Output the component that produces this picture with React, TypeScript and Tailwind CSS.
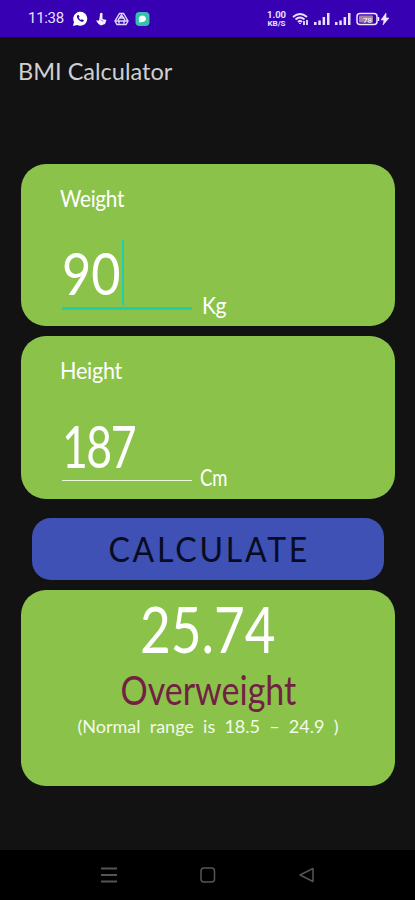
import React from "react";

function StatusBar() {
  return (
    <header className="flex h-[37px] shrink-0 items-center bg-[#3700b3] pl-[28px] pr-[25px] text-[#e9e0ff]">
      <span className="w-[44px] whitespace-nowrap font-['Roboto',sans-serif] text-[15px] leading-[19px] tracking-[-0.3px]">11:38</span>
      <svg className="mr-[7px]" width="16" height="16" viewBox="0 0 16 16">
        <path d="M1 15l1-4A7 7 0 1 1 5 14Z" fill="#fff" />
        <path d="M5 4.500c-.8 3 3 6.500 6 6.300l1-1.600-2-1-1 .8c-1-.4-1.800-1.200-2.200-2.200l.7-1-1-2Z" fill="#3700b3" />
      </svg>
      <svg className="mr-[6px]" width="13" height="16" viewBox="0 0 13 16" fill="#f5efff">
        <path d="M5 2.500q1.500-1.500 2.500 0V8l4 1L10 13 6 14.500 3.500 13 1 9.500 4 9.500 4.500 7Z" />
        <path d="M6 8.500l2 2" stroke="#7a50d0" />
      </svg>
      <svg className="mr-[6px]" width="15" height="16" viewBox="0 0 15 16" fill="none" stroke="#e2d8ff" strokeWidth="1.400">
        <path d="M5.500 2.500h4L14 10l-2 3.500H3L1 10ZM4 9l3.500-5L11 9M2 10h11M5 9.500v3M10 9.500v3M6 7h3" />
      </svg>
      <svg width="15" height="16" viewBox="0 0 15 16">
        <rect x="0.500" y="1" width="14" height="14" rx="4" fill="#38bfae" />
        <path d="M4 11.500l.3-2A3.600 3.200 0 1 1 7 11Z" fill="#f2ffff" />
      </svg>
      <div className="ml-auto flex items-center">
        <div className="mr-[5px] flex h-[18px] w-[21px] flex-col items-center justify-between font-['Roboto',sans-serif] font-bold">
          <span className="text-[9.500px] leading-[9px]">1.00</span>
          <span className="text-[8px] leading-[8px]">KB/S</span>
        </div>
        <svg className="mr-[5px]" width="17" height="14" viewBox="0 0 17 14" fill="none" stroke="#e9e0ff" strokeWidth="1.800">
          <path d="M1 5q7-6 14 0M3.500 7.500q4.500-4 9 0M6 10q2-2 4 0" />
          <path d="M8 12v-1M12 13V9M15 8v5" />
        </svg>
        <svg className="mr-[5px]" width="16" height="13" viewBox="0 0 16 13" fill="#e9e0ff">
          <path d="M0 10h2.500v3H0zM4.300 8.500h2.500V13H4.300zM8.600 5h2.500v8H8.600zM13 1h2.500v12H13z" />
        </svg>
        <svg className="mr-[5px]" width="16" height="13" viewBox="0 0 16 13" fill="#e9e0ff">
          <path d="M0 10h2.500v3H0zM4.300 8.500h2.500V13H4.300zM8.600 5h2.500v8H8.600zM13 1h2.500v12H13z" />
        </svg>
        <svg width="34" height="14" viewBox="0 0 34 14">
          <rect x="1" y="1.500" width="20" height="11" rx="3" fill="#3700b3" stroke="#efe6ff" strokeWidth="1.500" />
          <rect x="3" y="3.500" width="14" height="7" rx="1" fill="#a5809f" />
          <text x="7" y="10.500" fontSize="8" fontFamily="Roboto, sans-serif" fill="#fff">78</text>
          <path d="M22.500 5v4" stroke="#efe6ff" strokeWidth="1.500" />
          <path d="M30 1l-5 7h3l-1 5 6-7h-3Z" fill="#efe6ff" stroke="#efe6ff" strokeWidth="0.600" />
        </svg>
      </div>
    </header>
  );
}

export default function App() {
  return (
    <div className="flex h-[900px] w-[415px] flex-col overflow-hidden bg-[#121212] font-['Lato',sans-serif] text-white">
      <StatusBar />
      <h1 className="mt-[19px] ml-[18px] h-[30px] w-max origin-left scale-x-[0.98] whitespace-nowrap text-[24px] leading-[30px] text-[#d0d0d0]">BMI Calculator</h1>

      <main className="mx-[21px] mt-[78px] flex w-[374px] flex-col">
        <section className="flex h-[162px] flex-col rounded-[25px] bg-[#8bc34a] pl-[39px] pt-[19px]">
          <h2 className="h-[30px] w-max origin-left scale-x-[0.9] text-[23px] leading-[30px] tracking-[-0.300px]">Weight</h2>
          <div className="mt-[27px] flex h-[70px]">
            <div className="ml-[2px] flex w-[130px] flex-col border-b-[3px] border-[#22cda9]">
              <div className="flex h-[65px] items-start">
                <span className="w-[60px] origin-left scale-x-[0.87] whitespace-nowrap text-[58px] leading-[66px]">90</span>
                <span className="h-[65px] w-[2px] bg-[#22cda9]" />
              </div>
            </div>
            <span className="ml-[10px] mt-[50px] h-[30px] origin-left scale-x-[0.88] text-[24px] leading-[30px] tracking-[-0.500px]">Kg</span>
          </div>
        </section>

        <section className="mt-[10px] flex h-[163px] flex-col rounded-[25px] bg-[#8bc34a] pl-[39px] pt-[19px]">
          <h2 className="h-[30px] w-max origin-left scale-x-[0.94] text-[23px] leading-[30px] tracking-[-0.300px]">Height</h2>
          <div className="mt-[27px] flex h-[69px]">
            <div className="ml-[2px] w-[130px] border-b-[1.500px] border-[#edf7df]">
              <span className="block w-max origin-left scale-x-[0.77] whitespace-nowrap text-[58px] leading-[68px] tracking-[-2px]">187</span>
            </div>
            <span className="ml-[8px] mt-[50px] h-[30px] origin-left scale-x-[0.77] text-[24px] leading-[30px]">Cm</span>
          </div>
        </section>

        <button className="mx-[11px] mt-[19px] flex h-[62px] items-center justify-center rounded-[19px] bg-[#3f51b5] pl-[3px] text-[34px] leading-[62px] tracking-[3px] text-[#080c20]">
          <span className="scale-x-[0.94]">CALCULATE</span>
        </button>

        <section className="mt-[10px] flex h-[196px] flex-col items-center rounded-[25px] bg-[#8bc34a] pt-[4px]">
          <span className="h-[70px] scale-x-[0.83] whitespace-nowrap text-[64px] leading-[70px]">25.74</span>
          <span className="mt-[3px] h-[46px] scale-x-[0.85] whitespace-nowrap text-[40px] leading-[46px] text-[#722044]">Overweight</span>
          <span className="h-[26px] whitespace-pre text-[18px] leading-[26px] text-[#f3f9e8]">(Normal  range  is  18.5  –  24.9  )</span>
        </section>
      </main>

      <nav className="mt-auto flex h-[50px] shrink-0 items-center bg-black pl-[101px]">
        <svg width="16" height="16" viewBox="0 0 16 16" stroke="#555" strokeWidth="2">
          <path d="M0 1.500h16M0 8h16M0 14.500h16" />
        </svg>
        <svg className="ml-[83px]" width="16" height="16" viewBox="0 0 16 16" fill="none" stroke="#555" strokeWidth="1.500">
          <rect x="1" y="1" width="13.500" height="14" rx="3" />
        </svg>
        <svg className="ml-[83px]" width="16" height="16" viewBox="0 0 16 16" fill="none" stroke="#555" strokeWidth="1.500" strokeLinejoin="round">
          <path d="M1 8L14 1.500v13Z" />
        </svg>
      </nav>
    </div>
  );
}
